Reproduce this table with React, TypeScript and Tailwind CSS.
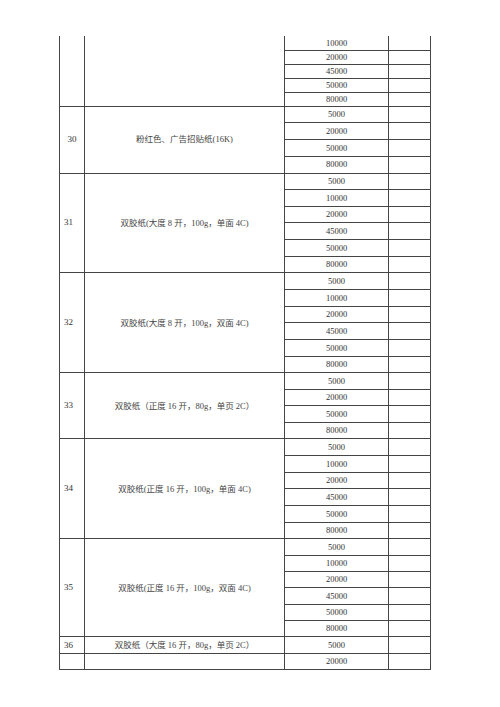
type Group = {
  no: string;
  name: string;
  qty: number[];
  rowH: string;
  centerNo?: boolean;
  open?: boolean;
};

const GROUPS: Group[] = [
  { no: "", name: "", qty: [10000, 20000, 45000, 50000, 80000], rowH: "h-[14px]", open: true },
  { no: "30", name: "粉红色、广告招贴纸(16K)", qty: [5000, 20000, 50000, 80000], rowH: "h-[16.75px]", centerNo: true },
  { no: "31", name: "双胶纸(大度 8 开，100g，单面 4C)", qty: [5000, 10000, 20000, 45000, 50000, 80000], rowH: "h-[16.67px]" },
  { no: "32", name: "双胶纸(大度 8 开，100g，双面 4C)", qty: [5000, 10000, 20000, 45000, 50000, 80000], rowH: "h-[16.67px]" },
  { no: "33", name: "双胶纸（正度 16 开，80g，单页 2C）", qty: [5000, 20000, 50000, 80000], rowH: "h-[16.5px]" },
  { no: "34", name: "双胶纸(正度 16 开，100g，单面 4C)", qty: [5000, 10000, 20000, 45000, 50000, 80000], rowH: "h-[16.67px]" },
  { no: "35", name: "双胶纸(正度 16 开，100g，双面 4C)", qty: [5000, 10000, 20000, 45000, 50000, 80000], rowH: "h-[16.33px]" },
  { no: "36", name: "双胶纸（大度 16 开，80g，单页 2C）", qty: [5000], rowH: "h-[16.5px]" },
  { no: "", name: "", qty: [20000], rowH: "h-[16.5px]" },
];

const cell = "border border-[#454545] p-0";

export default function App() {
  return (
    <div
      className="min-h-[707px] w-[500px] bg-white pt-[36px] pl-[59px] text-[#333]"
      style={{ fontFamily: '"Liberation Serif", "Noto Sans CJK SC", serif' }}
    >
      <table className="w-[371px] table-fixed border-collapse text-[9px] leading-none">
        <colgroup>
          <col className="w-[25px]" />
          <col className="w-[200px]" />
          <col className="w-[104px]" />
          <col className="w-[42px]" />
        </colgroup>
        <tbody>
          {GROUPS.map((g, gi) =>
            g.qty.map((q, qi) => (
              <tr key={`${gi}-${qi}`} className={g.rowH}>
                {qi === 0 && (
                  <>
                    <td
                      rowSpan={g.qty.length}
                      className={`${cell} ${g.open ? "border-t-0" : ""} ${g.centerNo ? "text-center" : "pl-[4px] text-left"} align-middle`}
                    >
                      {g.no}
                    </td>
                    <td
                      rowSpan={g.qty.length}
                      className={`${cell} ${g.open ? "border-t-0 border-l-[#9a9a9a]" : ""} text-center align-middle text-[8.5px] text-[#444]`}
                    >
                      {g.name}
                    </td>
                  </>
                )}
                <td
                  className={`${cell} ${g.open && qi === 0 ? "border-t-0" : ""} ${g.open ? "border-l-[#a0a0a0]" : ""} text-center align-middle text-[8.5px]`}
                >
                  {q}
                </td>
                <td className={`${cell} ${g.open && qi === 0 ? "border-t-0" : ""}`}></td>
              </tr>
            ))
          )}
        </tbody>
      </table>
    </div>
  );
}
